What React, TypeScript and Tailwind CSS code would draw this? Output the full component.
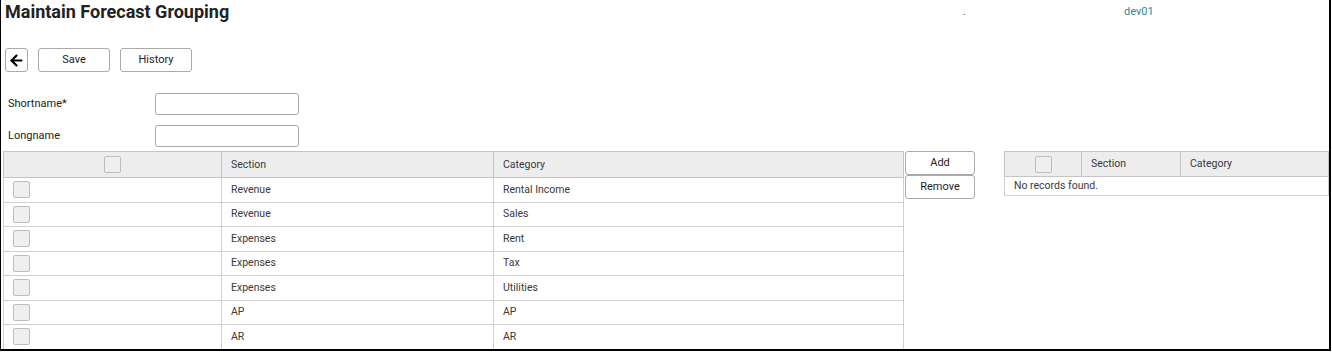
import { ArrowLeft } from 'lucide-react';

const rows = [
  { section: 'Revenue', category: 'Rental Income' },
  { section: 'Revenue', category: 'Sales' },
  { section: 'Expenses', category: 'Rent' },
  { section: 'Expenses', category: 'Tax' },
  { section: 'Expenses', category: 'Utilities' },
  { section: 'AP', category: 'AP' },
  { section: 'AR', category: 'AR' },
];

function Box() {
  return <div className="w-[17px] h-[17px] rounded-[2px] border border-[#bdbdbd] bg-[#efefef]" />;
}

export default function App() {
  return (
    <div
      className="w-[1331px] h-[351px] bg-white border-l border-r-2 border-b-2 border-black text-[#333] overflow-hidden"
      style={{ fontFamily: 'Roboto, "Liberation Sans", sans-serif' }}
    >
      {/* Header */}
      <div className="grid grid-cols-[962px_161px_1fr] h-[28px] items-start">
        <h1 className="pl-[4px] pt-[1px] text-[18px] leading-[22px] font-bold text-[#222]">
          Maintain Forecast Grouping
        </h1>
        <span className="text-[11px] pt-[4px] text-[#555]">.</span>
        <span className="text-[11px] pt-[4px] text-[#2b8a98]">dev01</span>
      </div>

      {/* Toolbar */}
      <div className="flex items-center gap-[10px] mt-[20px] pl-[4px]">
        <button className="w-[23px] h-[24px] border border-[#aaa] rounded-[3px] flex items-center justify-center">
          <ArrowLeft className="w-[17px] h-[17px] text-black" strokeWidth={3} />
        </button>
        <button className="w-[72px] h-[24px] border border-[#aaa] rounded-[3px] text-[11px] text-[#222]">Save</button>
        <button className="w-[72px] h-[24px] border border-[#aaa] rounded-[3px] text-[11px] text-[#222]">History</button>
      </div>

      {/* Form */}
      <div className="mt-[21px] pl-[7px] flex flex-col gap-[10px] text-[11px] text-[#222]">
        <div className="flex items-center">
          <label className="w-[147px]">Shortname*</label>
          <input className="w-[144px] h-[22px] border border-[#aaa] rounded-[3px]" />
        </div>
        <div className="flex items-center">
          <label className="w-[147px]">Longname</label>
          <input className="w-[144px] h-[22px] border border-[#aaa] rounded-[3px]" />
        </div>
      </div>

      {/* Tables */}
      <div className="flex items-start mt-[4px] pl-[2px] text-[10.5px] text-[#3a3a3a]">
        <table className="w-[900px] border-collapse table-fixed">
          <colgroup>
            <col className="w-[218px]" />
            <col className="w-[272px]" />
            <col className="w-[410px]" />
          </colgroup>
          <thead>
            <tr className="h-[26px] bg-[#ededed]">
              <th className="border border-[#c4c4c4] font-normal">
                <div className="flex justify-center">
                  <Box />
                </div>
              </th>
              <th className="border border-[#c4c4c4] font-normal text-left pl-[9px]">Section</th>
              <th className="border border-[#c4c4c4] font-normal text-left pl-[9px]">Category</th>
            </tr>
          </thead>
          <tbody>
            {rows.map((r, i) => (
              <tr key={i} className="h-[24.5px]">
                <td className="border border-[#d0d0d0] pl-[9px]">
                  <Box />
                </td>
                <td className="border border-[#d0d0d0] pl-[9px]">{r.section}</td>
                <td className="border border-[#d0d0d0] pl-[9px]">{r.category}</td>
              </tr>
            ))}
          </tbody>
        </table>

        <div className="flex flex-col w-[71px] ml-[1px] text-[11px] text-[#222]">
          <button className="h-[24px] border border-[#aaa] rounded-[3px]">Add</button>
          <button className="h-[24px] border border-[#aaa] rounded-[3px]">Remove</button>
        </div>

        <table className="w-[324px] ml-[29px] border-collapse table-fixed">
          <colgroup>
            <col className="w-[77px]" />
            <col className="w-[99px]" />
            <col className="w-[148px]" />
          </colgroup>
          <thead>
            <tr className="h-[25px] bg-[#ededed]">
              <th className="border border-[#c4c4c4] font-normal">
                <div className="flex justify-center">
                  <Box />
                </div>
              </th>
              <th className="border border-[#c4c4c4] font-normal text-left pl-[9px]">Section</th>
              <th className="border border-[#c4c4c4] font-normal text-left pl-[9px]">Category</th>
            </tr>
          </thead>
          <tbody>
            <tr className="h-[19px]">
              <td colSpan={3} className="border border-[#d0d0d0] pl-[9px]">
                No records found.
              </td>
            </tr>
          </tbody>
        </table>
      </div>
    </div>
  );
}
